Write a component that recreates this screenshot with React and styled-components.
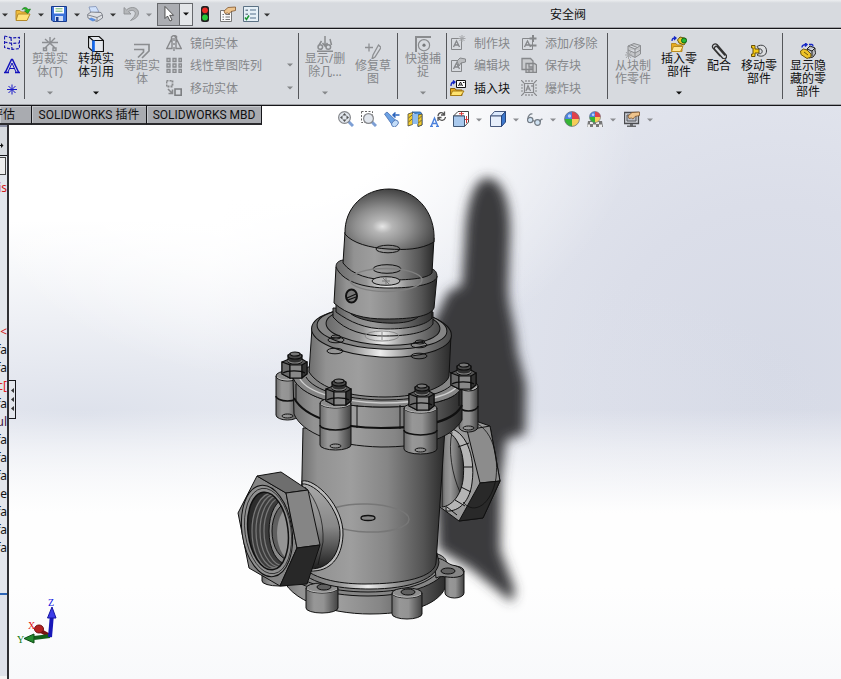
import React from 'react';
import styled, { createGlobalStyle, ThemeProvider } from 'styled-components';

const theme = {
    barColor: '#d7dadf',
    textColor: '#101010',
    mutedColor: '#85878a',
    lineColor: '#16161a',
    tabColor: '#a9abb0',
    panelColor: '#e3e6ec',
};

/* ---------- icons ---------- */

const block = (c) => (
    <g fill="none" stroke={c}>
        <path d="M1.500 3.500H11.500V14.500H1.500Z" />
        <path d="M3.500 12L6.500 6L9.500 12M4.500 10H8.500" strokeWidth="1.300" />
    </g>
);

const ball = (
    <g>
        <path d="M8 8V0.500A7.500 7.500 0 0 0 0.500 8Z" fill="#4c83e0" />
        <path d="M8 8V0.500A7.500 7.500 0 0 1 15.500 8Z" fill="#e0424a" />
        <path d="M8 8H0.500A7.500 7.500 0 0 0 8 15.500Z" fill="#35b535" />
        <path d="M8 8H15.500A7.500 7.500 0 0 1 8 15.500Z" fill="#f5cd58" />
        <circle cx="5.500" cy="5" r="1.700" fill="#b9d3fb" />
        <circle cx="8" cy="8" r="7.400" fill="none" stroke="#6d7480" strokeWidth="0.800" />
    </g>
);

const hand = (
    <path d="M4 5L8 1.500L15.500 1V4.500L11 5.500L9 8L7.500 7L5 7.500Z" fill="#eec48d" stroke="#80552c" strokeWidth="0.800" />
);

const icons = {
    open: (
        <>
            <path d="M1 4.500H5L6.500 6H12V13.500H1Z" fill="#f1bd3a" stroke="#b58a2a" />
            <path d="M3 8H15L12 14.500H1Z" fill="#ffe27a" stroke="#b58a2a" />
            <path d="M7 3.500C9 0.500 12 1 13 3.500L15.500 3L13 7.500L9.500 5L11.200 4.400C10.500 3 9 2.700 7 3.500Z" fill="#25b825" stroke="#126f12" strokeWidth="0.600" />
        </>
    ),
    save: (
        <>
            <path d="M0.500 0.500H15.500V15.500H2L0.500 14Z" fill="#3c73d9" stroke="#173a8c" />
            <path d="M3 1H13V7.500H3Z" fill="#fff" />
            <path d="M4.500 2.800H11.500M4.500 5.200H11.500" stroke="#65b36a" />
            <path d="M4 10H12V15H4Z" fill="#cfdcf6" />
            <path d="M5 11H7.500V15H5Z" fill="#173a8c" />
        </>
    ),
    print: (
        <>
            <path d="M4 7L2 1L9 0.500L12 6Z" fill="#cfe0fb" stroke="#7f91b5" strokeWidth="0.800" />
            <path d="M0.500 8.500L4 6L14 6.500L15.500 9V12L10 15.500L1 12Z" fill="#dfe1e5" stroke="#6c7079" strokeWidth="0.800" />
            <path d="M1 9L10 11.500L15 9M10 11.500V15" fill="none" stroke="#6c7079" strokeWidth="0.800" />
            <path d="M4 11.500L9 13.500L6 15.500L2 13.500Z" fill="#5c8fe0" />
        </>
    ),
    undo: <path d="M1 1.500V8H8L5.500 5.600C9 3 13.500 5 12 9C11.200 11 9.500 12.500 7.500 14.500C12.500 13 15.500 10.500 15.500 6.800C15.500 1.500 8 -0.500 3.600 3.900Z" fill="#b5b7ba" stroke="#898b8e" strokeWidth="0.800" />,
    cursor: <path d="M4 0.500V12.500L6.500 10L9 15L11 14L8.700 9.300H12.500Z" fill="#fff" stroke="#333" strokeWidth="0.800" />,
    rebuild: (
        <>
            <rect x="4" y="0" width="8" height="16" rx="2.500" fill="#20201f" />
            <circle cx="8" cy="4.300" r="2.900" fill="#ed2b25" />
            <circle cx="8" cy="11.500" r="2.900" fill="#28c93b" />
        </>
    ),
    props: (
        <>
            <path d="M0.500 4.500H11.500V15.500H0.500Z" fill="#fafafa" stroke="#777" />
            <path d="M2.500 8.500H4M5.500 8.500H10M2.500 11H4M5.500 11H10M2.500 13.500H4M5.500 13.500H10" stroke="#777" />
            {hand}
        </>
    ),
    options: (
        <>
            <path d="M0.500 0.500H15.500V15.500H0.500Z" fill="#e6f0f7" stroke="#5b7184" />
            <path d="M7 4H13M7 8H13M7 12H13" stroke="#54708c" />
            <path d="M2.500 3.500H5V5H2.500ZM2.500 7.500H5V9H2.500Z" fill="#789" />
            <path d="M2 11.500L3.500 13.500L6 9.500" fill="none" stroke="#1d9633" strokeWidth="1.500" />
        </>
    ),
    surface: <path d="M0.500 1L8 3L15.500 2.500V13.500L8 14.500L0.500 12.500ZM0.500 7L8 8.500L15.500 8M7 3L8 14" fill="none" stroke="#1818b0" strokeWidth="1.200" strokeDasharray="3 1.500" />,
    text: (
        <>
            <path d="M1.500 14L7.500 1.500H8.500L14.500 14M0 14.500H5M11 14.500H16" fill="none" stroke="#1212bc" strokeWidth="1.500" />
            <path d="M4 14L8 5L12 14M5.500 10.500H10.500" fill="none" stroke="#1212bc" />
        </>
    ),
    point: <path d="M8 3.500V13.500M3 8.500H13M4.500 5L11.500 12M11.500 5L4.500 12" stroke="#1818c8" />,
    trim: <path d="M0 6.500H6M9 6.500H16M8 1V7L3 12M8 7L13 12M3 3L11 10M13 2L6 9M1.500 12H4.500V14.500H1.500ZM11 12H14V14.500H11Z" fill="none" stroke="#8c8e92" strokeWidth="1.400" />,
    convert: (
        <>
            <path d="M5 4.500H15.500V15.500H5Z" fill="#e4e7ec" stroke="#111" strokeWidth="1.200" />
            <path d="M0.500 0.500H11L15.500 4.500H5ZM0.500 0.500V11.500L5 15.500V4.500Z" fill="#e4e7ec" stroke="#111" strokeWidth="1.200" />
            <path d="M5.500 4.500V15.500" stroke="#1268f0" strokeWidth="2.600" />
        </>
    ),
    offset: <path d="M0 1.500H15V8L8 15M0 6.500H9.500V9L4 14.500" fill="none" stroke="#8b8d90" strokeWidth="1.700" />,
    mirror: <path d="M5.500 1.500V4L0.800 13.500H6V3M10 3V13.500H15.200L10.500 4V1.500L8 0ZM8 0L5.500 2M8 3V6M8 8V10M8 12V16" fill="none" stroke="#88898c" strokeWidth="1.400" />,
    pattern: <path d="M1 1.500H4V4.500H1ZM7 1.500H10V4.500H7ZM13 1.500H15.500V4.500H13ZM1 7H4V10H1ZM7 7H10V10H7ZM13 7H15.500V10H13ZM1 12.500H4V15.500H1ZM7 12.500H10V15.500H7ZM13 12.500H15.500V15.500H13Z" fill="#c5c7ca" stroke="#898b8e" strokeWidth="1.300" />,
    move: (
        <>
            <path d="M0.500 0.500H6.500V6.500H0.500Z" fill="none" stroke="#88898c" strokeDasharray="2 1" strokeWidth="1.800" />
            <path d="M9 9H15.200V15.200H9Z" fill="none" stroke="#7d7f82" strokeWidth="1.600" />
            <path d="M2 9L6 13M6.500 9.500V13.500H2.500" fill="none" stroke="#88898c" strokeWidth="1.600" />
        </>
    ),
    relations: <path d="M8 0V9M5.500 7L8 10L10.500 7M0 15.200H16M4.500 5L1.500 10M13 3L14.500 9M1 11A2.300 2.300 0 1 0 5.600 11A2.300 2.300 0 1 0 1 11M9 11A2.300 2.300 0 1 0 13.600 11A2.300 2.300 0 1 0 9 11" fill="none" stroke="#8a8c8f" strokeWidth="1.500" />,
    repair: <path d="M4 0.500V8.500M0 4.500H8M13.500 2L16 4.500L10 14L7 16L8 12Z" fill="none" stroke="#8d8f92" strokeWidth="1.300" />,
    snap: (
        <>
            <path d="M0 1H16M1 0V16" stroke="#8a8c8f" strokeWidth="2" />
            <circle cx="9" cy="9.200" r="5.600" fill="none" stroke="#8a8c8f" strokeWidth="1.200" />
            <circle cx="9" cy="9.200" r="1.600" fill="#77797c" />
        </>
    ),
    makeBlock: <>{block('#85878a')}<path d="M12 0V7M8.500 3.500H15.500M9.500 1L14.500 6M14.500 1L9.500 6" stroke="#a2a4a7" /></>,
    editBlock: <>{block('#85878a')}<path d="M7 4L10 1L15.500 2V5L11 6L9 9Z" fill="#bcbec1" stroke="#85878a" /></>,
    insertBlock: (
        <>
            <path d="M6.500 0.500H15.500V7.500H6.500Z" fill="#fff" stroke="#111" />
            <path d="M8.500 6L10.500 2L12.500 6M9.500 5H11.500M13 2.500H14.500" stroke="#111" fill="none" />
            <path d="M1 6C1 3 2 2 4 2M3 0.500L5 2L3 4" stroke="#1527c5" strokeWidth="1.300" fill="none" />
            <path d="M0.500 8.500H5L6 10H12V15.500H0.500Z" fill="#e7ab20" stroke="#8b6410" />
            <path d="M2.500 11H14L11 15.500H0.500Z" fill="#ffe36e" stroke="#a67c16" />
        </>
    ),
    addBlock: <>{block('#85878a')}<path d="M12 0V7M8.500 3.500H15.500M9 10.500H15.500" stroke="#85878a" strokeWidth="2" /></>,
    saveBlock: <path d="M1 1.500H9.500L12 4V12.500H1ZM5 6.500H13.500L15.500 8V15.500H5ZM8 7V10H12V7M8 15V12H12V15" fill="#c8cacd" stroke="#85878a" strokeWidth="1.300" />,
    explode: <path d="M3.500 3.500H12.500V12.500H3.500ZM5 11L7 5.500L9.500 11M6 9H8.500M11 5V7M0 0L3 3M16 0L13 3M0 16L3 13M16 16L13 13M5 0V2M8 0V2M11 0V2M0 5H2M0 8H2M0 11H2M14 5H16M14 8H16M14 11H16M5 14V16M8 14V16M11 14V16" fill="none" stroke="#88898c" strokeWidth="1.200" />,
    fromBlock: (
        <>
            <path d="M3 3L9 0.500L15.500 2.500V11L10 14.500L3 11ZM3 3L10 6L15.500 2.500M10 6V14M6 2L12.500 4.500M3 7L10 10L15.500 7" fill="#c4c6c9" stroke="#8b8d90" />
            <path d="M3.500 8V16M0 12H7M1 9L6 15M6 9L1 15" stroke="#a5a7aa" />
        </>
    ),
    insertPart: (
        <>
            <path d="M0.500 7.500H5L6 9H11V15.500H0.500Z" fill="#e7ab20" stroke="#b88a20" />
            <path d="M2.500 10.500H12L9.500 15.500H0.500Z" fill="#ffe693" stroke="#b88a20" />
            <path d="M1 5C1 2.500 2 2 4.500 2M3 0.500L5 2L3 4" stroke="#1527c5" strokeWidth="1.300" fill="none" />
            <path d="M6.500 4L9 1L15 2.500V6L13 9L8 7Z" fill="#ecc928" stroke="#6e5a0e" />
            <circle cx="13" cy="4.500" r="2.500" fill="#29b83a" stroke="#0d6819" />
        </>
    ),
    mate: <path d="M14 12.500L6.500 4A1.800 1.800 0 0 0 3.800 6.500L11.500 15A2.300 2.300 0 0 0 15 12L6 1.500A2.800 2.800 0 0 0 1.800 5L9 13" fill="none" stroke="#333" strokeWidth="1.300" />,
    movePart: (
        <>
            <path d="M0.500 2.500H4V6H8V10H4V13.500H0.500V11H2V5H0.500Z" fill="#f4c915" stroke="#695008" />
            <path d="M6 3.500C11 0.500 15.500 3 15.500 8C15.500 13 10 14.500 6 12L8 10.500C12 12 12.500 5 8 6Z" fill="#dcdee1" stroke="#3b3d40" />
        </>
    ),
    hidden: (
        <>
            <path d="M7 6L10 3L15 5V8L16 10L13 14L9 15Z M7 6L12 8L15 5M12 8V13" fill="#b9bbbf" stroke="#222" />
            <path d="M0.500 8L3.500 6L7 7L11 11V14L7 15.500L1 11.500Z M4 9L8 12" fill="#edc229" stroke="#6e560c" />
            <path d="M2 4.500C2 2 4 1.500 6.500 1.500M5 0L7 1.500L5 3.500M9 1.500H12C13 1.500 13 2.500 13 3.500" fill="none" stroke="#1527c5" strokeWidth="1.400" />
        </>
    ),
    zoomFit: (
        <>
            <path d="M10 10L15 15" stroke="#7d9fd5" strokeWidth="3" />
            <circle cx="6.500" cy="6.500" r="5.900" fill="#e1e6ed" stroke="#85878b" strokeWidth="1.200" />
            <path d="M6.500 2L8.500 4.500H4.500ZM6.500 11L8.500 8.500H4.500ZM2 6.500L4.500 4.500V8.500ZM11 6.500L8.500 4.500V8.500Z" fill="#555" />
            <circle cx="6.500" cy="6.500" r="1.500" fill="#e1e6ed" />
        </>
    ),
    zoomArea: (
        <>
            <path d="M0.500 0.500H11.500V11.500H0.500Z" fill="none" stroke="#666" strokeDasharray="2 1.500" />
            <path d="M10.500 10.500L15 15" stroke="#7d9fd5" strokeWidth="3" />
            <circle cx="7.500" cy="7.500" r="4.900" fill="#e1e6ed" stroke="#85878b" strokeWidth="1.200" />
        </>
    ),
    prevView: (
        <>
            <path d="M0.500 3L3 1L13 10.500L9 15Z" fill="#6ca2e4" stroke="#4a6fae" strokeWidth="0.800" />
            <ellipse cx="11" cy="12.500" rx="3.800" ry="2.800" transform="rotate(-45 11 12.500)" fill="#c3ddf9" stroke="#4a6fae" strokeWidth="0.800" />
            <path d="M9 4H15.500M11.500 1.500L9 4L11.500 6.500" fill="none" stroke="#2b64bd" strokeWidth="1.500" />
        </>
    ),
    section: (
        <>
            <path d="M5 1H13.500L15 3V14L11 15.500V4Z" fill="#4a90dd" stroke="#225694" strokeWidth="0.800" />
            <path d="M1 3L5.500 1.500V13.500L1 15ZM11 4L15 3V14L11 15.500Z" fill="#f3cc2d" stroke="#4a4a40" strokeWidth="0.800" />
            <path d="M5.500 3H11V13H5.500Z" fill="#8dbbef" />
            <path d="M1.500 7L5 4M1.500 11L5 8M11.500 8L14.500 5M11.500 12L14.500 9" stroke="#4a4a40" strokeWidth="0.800" />
        </>
    ),
    orient: (
        <>
            <path d="M1 15.500L4.500 7L8 15.500M2.500 12.500H6.500M0 15.500H3M6 15.500H9" fill="none" stroke="#4a80dc" strokeWidth="1.400" />
            <path d="M8 5C8.500 1 12.500 0.500 14 3.500M14.500 0.500V4H11M15.500 6C15 10 10 10.500 8.500 7M8 10V6.500H11.500" fill="none" stroke="#555" strokeWidth="1.300" />
        </>
    ),
    viewCube: (
        <>
            <path d="M5 0.500H15.500V11L11.500 15.500V5H0.500Z" fill="#fff" stroke="#444" />
            <path d="M0.500 5H11.500V15.500H0.500Z" fill="#a9c9ed" stroke="#3f5674" />
            <path d="M8.500 1V4.500M6 2.700H11M13.500 5V12M12 8.500H15.500" stroke="#dc3838" />
        </>
    ),
    display: (
        <>
            <path d="M0.500 5L4.500 0.500H15.500L11.500 5Z" fill="#dceafd" stroke="#47597e" />
            <path d="M0.500 5H11.500V15.500H0.500Z" fill="#e6eefa" stroke="#47597e" />
            <path d="M11.500 5L15.500 0.500V11L11.500 15.500Z" fill="#3d78cd" stroke="#27457c" />
        </>
    ),
    glasses: (
        <g fill="#cfe2f3" stroke="#737b84" strokeWidth="1.200">
            <circle cx="3.200" cy="9" r="2.700" />
            <circle cx="10.500" cy="11.500" r="2.800" />
            <path d="M6 9.500L8 10.500M0.800 8C1 5 3 2.500 5.500 3M13.200 11C13.500 8.500 14.500 7.500 15.500 8.500" fill="none" />
        </g>
    ),
    appearance: ball,
    scene: (
        <>
            <path d="M1 10H15L16 16H0Z" fill="#777" />
            <path d="M3 11H6V13H3ZM9 11H12V13H9ZM0.500 13.500H3V16H0.500ZM6 13.500H9V16H6ZM12 13.500H15V16H12Z" fill="#eee" />
            <g transform="translate(2 0) scale(0.750)">{ball}</g>
        </>
    ),
    viewSettings: (
        <>
            <path d="M0.500 1.500H14.500V12.500H0.500Z" fill="#ced1d7" stroke="#4c4d50" strokeWidth="1.300" />
            <path d="M3 4H12V10H3Z" fill="#b9bec8" stroke="#55575a" />
            <path d="M6 13H9V14.500H12V16H3V14.500H6Z" fill="#66686b" />
            {hand}
        </>
    ),
};

function Icon({ name, size = 16 }) {
    return (
        <svg width={size} height={size} viewBox="0 0 16 16" aria-hidden="true">
            {icons[name]}
        </svg>
    );
}

function Caret() {
    return (
        <svg width="6" height="4" viewBox="0 0 6 4" aria-hidden="true">
            <path d="M0 0.500H6L3 3.500Z" fill="currentColor" />
        </svg>
    );
}

/* ---------- 3D model ---------- */

function Lug({ x, y, w, h, split }) {
    const r = w / 2;
    const side = `A${r} 5 0 0 0 ${x + w}`;
    return (
        <g stroke="#101010">
            <path d={`M${x} ${y}V${y + h}${side} ${y + h}V${y}Z`} fill="url(#lug)" />
            <ellipse cx={x + r} cy={y} rx={r} ry="5" fill="#8d8d8d" />
            <path d={`M${x + 1} ${y + 1}A${r} 5 0 0 0 ${x + w - 1} ${y + 1}`} fill="none" stroke="#bbb" />
            {split && (
                <>
                    <path d={`M${x} ${y + split}${side} ${y + split}`} fill="none" strokeWidth="1.600" />
                    <ellipse cx={x + r} cy={y + h + 1} rx="5.500" ry="2" fill="none" />
                </>
            )}
        </g>
    );
}

function Bolt({ x, y }) {
    return (
        <g transform={`translate(${x} ${y})`} stroke="#0c0c0c" strokeWidth="1.100">
            <path d="M-13 -7L-6 -10H7L12 -7V5L6 9H-5L-13 5Z" fill="#555" />
            <path d="M-13 -7L-5 -4V9L-13 5Z" fill="#6a6a6a" />
            <path d="M-5 -4H7V9H-5Z" fill="#888" />
            <path d="M7 -4L12 -7V5L7 9Z" fill="#333" />
            <path d="M-12 4A12 3.500 0 0 1 10 4" fill="none" />
            <path d="M-7 -14V-8A7 3 0 0 0 7 -8V-14Z" fill="#303030" />
            <ellipse cx="0" cy="-13" rx="7" ry="3" fill="#4a4a4a" />
            <ellipse cx="0" cy="-15" rx="5" ry="2" fill="#777" />
            <path d="M-7 -9A7 3 0 0 0 7 -9" fill="none" stroke="#858585" />
        </g>
    );
}

const baseHoles = [
    [324, 587],
    [408, 592],
    [448, 571],
];

const threads = [4, 8, 12, 16];

function SafetyValve() {
    return (
        <ModelSvg viewBox="230 150 320 480" role="img" aria-label="安全阀">
            <defs>
                <linearGradient id="lug">
                    <stop offset="0" stopColor="#6c6c6c" />
                    <stop offset="0.250" stopColor="#979797" />
                    <stop offset="0.550" stopColor="#939393" />
                    <stop offset="1" stopColor="#424242" />
                </linearGradient>
                <linearGradient id="metal">
                    <stop offset="0" stopColor="#5c5c5c" />
                    <stop offset="0.150" stopColor="#858585" />
                    <stop offset="0.400" stopColor="#989898" />
                    <stop offset="0.650" stopColor="#777" />
                    <stop offset="1" stopColor="#303030" />
                </linearGradient>
                <linearGradient id="metalWide">
                    <stop offset="0" stopColor="#6e6e6e" />
                    <stop offset="0.120" stopColor="#929292" />
                    <stop offset="0.350" stopColor="#9e9e9e" />
                    <stop offset="0.600" stopColor="#868686" />
                    <stop offset="0.850" stopColor="#545454" />
                    <stop offset="1" stopColor="#2a2a2a" />
                </linearGradient>
                <linearGradient id="shoulder">
                    <stop offset="0" stopColor="#6a6a6a" />
                    <stop offset="0.300" stopColor="#969696" />
                    <stop offset="0.500" stopColor="#ededed" />
                    <stop offset="0.700" stopColor="#949494" />
                    <stop offset="1" stopColor="#4a4a4a" />
                </linearGradient>
                <radialGradient id="dome" cx="0.420" cy="0.620" r="0.620">
                    <stop offset="0" stopColor="#e6e6e6" />
                    <stop offset="0.180" stopColor="#b5b5b5" />
                    <stop offset="0.500" stopColor="#8e8e8e" />
                    <stop offset="1" stopColor="#444" />
                </radialGradient>
                <linearGradient id="pipe" x1="0" y1="0" x2="0" y2="1">
                    <stop offset="0" stopColor="#a8a8a8" />
                    <stop offset="0.500" stopColor="#888" />
                    <stop offset="1" stopColor="#1e1e1e" />
                </linearGradient>
                <clipPath id="boreClip">
                    <ellipse cx="268" cy="531" rx="20" ry="39" transform="rotate(-7 268 531)" />
                </clipPath>
                <filter id="soft" x="-30%" y="-10%" width="160%" height="120%">
                    <feGaussianBlur stdDeviation="6" />
                </filter>
            </defs>

            <path
                d="M487 178C501 178 510 198 510 230L508 285C507 305 516 325 517 350L526 385L525 434L506 440L501 480L500 550L515 590L512 602L470 568L438 549L430 330L448 292L462 285L465 240C466 202 475 178 487 178Z"
                fill="#3a3b3d"
                filter="url(#soft)"
            />

            {/* outlet */}
            <g stroke="#101010" strokeLinejoin="round">
                <path d="M440 425L467 418L490 426L500 481L483 518L459 521L440 507Z" fill="#9a9a9a" />
                <path d="M467 430L490 426L500 481L480 483Z" fill="#8c8c8c" />
                <path d="M480 483L500 481L483 518L459 521Z" fill="#292929" />
                <path d="M448 428C465 430 476 455 472 483C470 500 460 512 446 511Z" fill="#b5b5b5" />
                <path d="M442 430C458 432 466 455 463 480C461 495 452 506 442 507Z" fill="url(#metal)" />
                <path d="M458 447L469 443M463 467L473 467M461 487L471 492M455 500L465 506M447 507L457 515" fill="none" />
                <path d="M467 420C490 424 499 450 496 478C492 504 474 516 463 502M452 432C448 450 452 475 460 492" fill="none" strokeWidth="0.800" />
            </g>

            {/* base flange */}
            <g stroke="#101010">
                <Lug x={262} y={571} w={34} h={10} />
                <path d="M280 566C280 600 330 614 370 614C420 614 446 600 447 580L446 562L300 560Z" fill="url(#metalWide)" />
                <path d="M278 562C284 584 325 596 368 596C412 596 446 582 447 565C446 552 436 546 300 548Z" fill="#858585" />
                <path d="M284 563C294 582 330 592 368 592C410 592 440 580 443 562" fill="none" />
                <Lug x={445} y={571} w={19} h={22} />
                <path d="M434 558C444 558 446 563 452 565C464 567 466 574 461 576C450 580 444 574 436 578Z" fill="#858585" />
                <Lug x={306} y={588} w={32} h={20} />
                <Lug x={392} y={593} w={30} h={21} />
                {baseHoles.map(([x, y]) => (
                    <ellipse key={x} cx={x} cy={y} rx="7" ry="3" fill="#606060" />
                ))}
            </g>

            {/* lower body */}
            <path d="M297 567C310 586 345 589 370 589C410 589 438 579 439 562L436 550L302 550Z" fill="url(#shoulder)" stroke="#101010" />
            <path d="M303 428L300 565C315 581 345 584 365 584C405 584 434 577 436 563L445 428Z" fill="url(#metalWide)" stroke="#101010" />
            <ellipse cx="367" cy="518" rx="42" ry="14" fill="none" stroke="#777" strokeWidth="1.500" transform="rotate(2 367 518)" />
            <ellipse cx="368" cy="518" rx="7" ry="2.500" fill="#858585" stroke="#101010" strokeWidth="1.300" />

            {/* inlet */}
            <g stroke="#101010" strokeLinejoin="round">
                <path d="M302 481C315 478 344 506 343 535C342 558 330 572 310 571Z" fill="#bbb" />
                <path d="M302 484C315 482 341 510 340 535C339 556 328 569 310 569Z" fill="url(#pipe)" />
                <path d="M305 487C317 500 324 520 323 542L318 565" fill="none" strokeWidth="0.700" />
                <path d="M257 476L238 513L249 568L280 586L297 548L286 493Z" fill="#858585" />
                <path d="M257 476L281 472L308 490L286 493Z" fill="#6e6e6e" />
                <path d="M286 493L308 490L320 545L297 548Z" fill="#858585" />
                <path d="M297 548L320 545L307 584L280 586Z" fill="#282828" />
                <ellipse cx="267" cy="531" rx="25" ry="46" transform="rotate(-8 267 531)" fill="#909090" />
                <ellipse cx="268" cy="531" rx="23" ry="43" transform="rotate(-8 268 531)" fill="none" strokeWidth="0.700" />
                <g clipPath="url(#boreClip)">
                    <path d="M240 485H296V580H240Z" fill="#2c2c2c" />
                    {threads.map((t) => (
                        <ellipse key={t} cx={268 + t} cy="531" rx="20" ry={39 - t / 4} fill="#3c3c3c" stroke="#777" strokeWidth="1.300" />
                    ))}
                    <ellipse cx="287" cy="531" rx="18" ry="33" fill="#8a8a8a" />
                    <ellipse cx="290" cy="531" rx="18" ry="29" fill="#5f5f5f" />
                    <ellipse cx="295" cy="533" rx="18" ry="29" fill="#949494" stroke="none" />
                </g>
                <ellipse cx="268" cy="531" rx="20" ry="39" transform="rotate(-7 268 531)" fill="none" strokeWidth="1.500" />
            </g>

            {/* bolted flange */}
            <Lug x={459} y={386} w={19} h={41} split={20} />
            <Lug x={276} y={376} w={23} h={39} split={20} />
            <g stroke="#101010">
                <path d="M293 378C302 396 335 407 381 407C430 407 458 400 462 386V420C450 440 420 447 381 447C335 446 302 433 294 414Z" fill="url(#metalWide)" />
                <path d="M293 378C301 396 335 407 381 407C430 407 458 400 462 386L450 372L310 366Z" fill="#858585" />
                <path d="M300 379C308 393 342 402 381 403C425 403 455 395 459 383" fill="none" stroke="#ccc" strokeWidth="1.500" />
                <path d="M306 377C314 391 345 399 381 400C425 400 450 392 455 380" fill="none" />
                <path d="M294 398C305 418 340 428 381 428C430 428 456 419 462 405" fill="none" strokeWidth="2" />
                <path d="M357 405V428M400 405V429M296 384V400M459 392V406" fill="none" />
            </g>
            <Lug x={320} y={403} w={31} h={42} split={22} />
            <Lug x={404} y={408} w={33} h={41} split={22} />

            {/* upper body */}
            <g stroke="#101010">
                <path d="M312 328L309 372C320 389 350 397 385 397C422 397 447 386 449 376L451 335Z" fill="url(#metalWide)" />
                <ellipse cx="381.500" cy="332" rx="70" ry="25" transform="rotate(3 381.500 332)" fill="url(#shoulder)" />
                <ellipse cx="382" cy="328" rx="65" ry="21" transform="rotate(3 382 328)" fill="#858585" />
                <ellipse cx="383" cy="326" rx="57" ry="19" transform="rotate(3 383 326)" fill="url(#shoulder)" />
                <g fill="none">
                    <ellipse cx="335" cy="351" rx="8" ry="2.800" />
                    <ellipse cx="336" cy="340" rx="8" ry="2.800" />
                    <ellipse cx="419" cy="356" rx="8" ry="2.800" />
                    <ellipse cx="419" cy="345" rx="8" ry="2.800" />
                    <ellipse cx="420" cy="342" rx="5" ry="2" />
                    <ellipse cx="336" cy="337" rx="5" ry="2" />
                </g>
            </g>

            {/* neck */}
            <g stroke="#101010">
                <path d="M333 308V317C345 331 365 336 385 336C410 336 428 332 433 324V312Z" fill="url(#shoulder)" />
                <path d="M336 300V312C350 322 365 329 386 329C410 329 426 325 432 318V304Z" fill="url(#metal)" />
                <path d="M349 312C358 323 406 328 418 317L420 310L345 305Z" fill="#4b4b4b" />
            </g>
            <ellipse cx="382" cy="336" rx="17" ry="5" fill="none" stroke="#888" />
            <path d="M382 332V340M377 336H387" stroke="#888" />

            {/* cap */}
            <g stroke="#101010">
                <path d="M336 267L334 303C347 315 365 319 385 319C410 319 430 317 434 308L437 276Z" fill="url(#metalWide)" />
                <path d="M343 260C338 261 336 263 336 267C342 281 362 288 389 288C412 288 434 285 437 277C437 272 435 270 432 269Z" fill="url(#shoulder)" />
                <path d="M345 232L343 263C352 275 370 280 390 280C412 280 428 278 432 273L434 238Z" fill="url(#metalWide)" />
                <path d="M345 234C344 208 364 189 389 189C415 189 436 211 434 242C420 250 405 250 388 249C370 248 352 243 345 234Z" fill="url(#dome)" />
                <ellipse cx="388" cy="249" rx="12" ry="3.800" fill="none" />
                <ellipse cx="387" cy="269" rx="14" ry="4.300" fill="none" />
                <ellipse cx="386" cy="281" rx="14" ry="4.300" fill="#b4b4b4" />
                <ellipse cx="386" cy="280" rx="36" ry="11.500" fill="none" stroke="#808080" strokeWidth="1.500" />
                <path d="M386 277V285M382 281H390M383 278L389 284" stroke="#777" />
                <ellipse cx="351.500" cy="296" rx="5.500" ry="6.500" fill="#777" strokeWidth="2" />
                <path d="M347 298L356 294M348 300L356 297" strokeWidth="1.200" />
            </g>

            <Bolt x={295} y={369} />
            <Bolt x={464} y={380} />
            <Bolt x={339} y={396} />
            <Bolt x={422} y={401} />
        </ModelSvg>
    );
}

function Triad() {
    return (
        <TriadSvg viewBox="16 594 44 52" role="img" aria-label="坐标轴">
            <path d="M50 636L39 630" stroke="#7b1414" strokeWidth="4" />
            <ellipse cx="39" cy="629" rx="4.500" ry="4" fill="#b32222" stroke="#701010" />
            <path d="M50 636L34 638" stroke="#14601b" strokeWidth="4" />
            <path d="M24 638.500L34 634V643Z" fill="#258a2e" stroke="#0b4b12" />
            <path d="M50 637L52 614" stroke="#1717b8" strokeWidth="4" />
            <path d="M52 607L56 618H47.500Z" fill="#3c3ce8" stroke="#1515a0" />
            <AxisName x="48" y="606" fill="#1111e0">Z</AxisName>
            <AxisName x="28" y="629" fill="#e01111">X</AxisName>
            <AxisName x="17" y="643" fill="#0f7a0f">Y</AxisName>
        </TriadSvg>
    );
}

/* ---------- toolbars ---------- */

function BigTool({ icon, lines, menu, muted, wide = 46 }) {
    return (
        <BigButton type="button" $muted={muted} $menu={menu} $wide={wide}>
            <Icon name={icon} />
            {lines.map((line) => (
                <BigLine key={line}>{line}</BigLine>
            ))}
            {menu && (
                <BigCaret>
                    <Caret />
                </BigCaret>
            )}
        </BigButton>
    );
}

function ToolList({ items, wide }) {
    return (
        <ListColumn $wide={wide}>
            {items.map(({ icon, label, menu, active }) => (
                <ListButton type="button" key={label} $muted={!active}>
                    <Icon name={icon} />
                    <ListLabel>{label}</ListLabel>
                    {menu && <Caret />}
                </ListButton>
            ))}
        </ListColumn>
    );
}

const quickTools = [
    { icon: 'open', label: '打开' },
    { icon: 'save', label: '保存' },
    { icon: 'print', label: '打印' },
    { icon: 'undo', label: '撤消', muted: true },
];

const viewTools = [
    { icon: 'zoomFit', label: '整屏显示全图' },
    { icon: 'zoomArea', label: '局部放大' },
    { icon: 'prevView', label: '上一视图' },
    { icon: 'section', label: '剖面视图' },
    { icon: 'orient', label: '动态注解视图' },
    { icon: 'viewCube', label: '视图定向', menu: true },
    { icon: 'display', label: '显示样式', menu: true },
    { icon: 'glasses', label: '隐藏所有类型', menu: true },
    { icon: 'appearance', label: '编辑外观' },
    { icon: 'scene', label: '应用布景', menu: true },
    { icon: 'viewSettings', label: '视图设定', menu: true },
];

const treeRows = [
    { text: 'is', color: '#d01818' },
    {}, {}, {}, {}, {}, {}, {},
    { text: '<', color: '#d01818' },
    { text: 'fa' },
    { text: 'fa' },
    { text: 'c[', color: '#e02020' },
    { text: 'fa' },
    { text: 'ul', color: '#401040' },
    { text: 'fa' },
    { text: 'fa' },
    { text: 'fa' },
    { text: 'e' },
    { text: 'fa' },
    { text: 'fa' },
    { text: 'fa' },
];

function App() {
    return (
        <ThemeProvider theme={theme}>
            <GlobalStyle />
            <Window>
                <TitleBar>
                    <CaretButton type="button" aria-label="新建选项">
                        <Caret />
                    </CaretButton>
                    {quickTools.map(({ icon, label, muted }) => (
                        <React.Fragment key={icon}>
                            <IconButton type="button" aria-label={label} $wide={26}>
                                <Icon name={icon} />
                            </IconButton>
                            <CaretButton type="button" aria-label={`${label}选项`} $muted={muted}>
                                <Caret />
                            </CaretButton>
                        </React.Fragment>
                    ))}
                    <SelectGroup>
                        <SelectButton type="button" aria-label="选择">
                            <Icon name="cursor" />
                        </SelectButton>
                        <SelectCaret type="button" aria-label="选择选项">
                            <Caret />
                        </SelectCaret>
                    </SelectGroup>
                    <IconButton type="button" aria-label="重建模型" $wide={23}>
                        <Icon name="rebuild" />
                    </IconButton>
                    <IconButton type="button" aria-label="文件属性" $wide={23}>
                        <Icon name="props" />
                    </IconButton>
                    <IconButton type="button" aria-label="选项" $wide={23}>
                        <Icon name="options" />
                    </IconButton>
                    <CaretButton type="button" aria-label="更多选项">
                        <Caret />
                    </CaretButton>
                    <Title>安全阀</Title>
                </TitleBar>

                <Ribbon>
                    <SketchColumn>
                        <SketchButton type="button" aria-label="曲面"><Icon name="surface" /></SketchButton>
                        <SketchButton type="button" aria-label="文字"><Icon name="text" /></SketchButton>
                        <SketchButton type="button" aria-label="点"><Icon name="point" /></SketchButton>
                    </SketchColumn>
                    <Group>
                        <BigTool icon="trim" lines={['剪裁实', '体(T)']} menu muted />
                        <BigTool icon="convert" lines={['转换实', '体引用']} menu />
                        <BigTool icon="offset" lines={['等距实', '体']} muted />
                        <ToolList
                            wide={133}
                            items={[
                                { icon: 'mirror', label: '镜向实体' },
                                { icon: 'pattern', label: '线性草图阵列', menu: true },
                                { icon: 'move', label: '移动实体', menu: true },
                            ]}
                        />
                    </Group>
                    <Group>
                        <BigTool icon="relations" lines={['显示/删', '除几...']} menu muted wide={48} />
                        <BigTool icon="repair" lines={['修复草', '图']} muted wide={48} />
                    </Group>
                    <Group>
                        <BigTool icon="snap" lines={['快速捕', '捉']} menu muted />
                    </Group>
                    <Group>
                        <ToolList
                            wide={71}
                            items={[
                                { icon: 'makeBlock', label: '制作块' },
                                { icon: 'editBlock', label: '编辑块' },
                                { icon: 'insertBlock', label: '插入块', active: true },
                            ]}
                        />
                        <ToolList
                            wide={87}
                            items={[
                                { icon: 'addBlock', label: '添加/移除' },
                                { icon: 'saveBlock', label: '保存块' },
                                { icon: 'explode', label: '爆炸块' },
                            ]}
                        />
                    </Group>
                    <Group>
                        <BigTool icon="fromBlock" lines={['从块制', '作零件']} muted />
                        <BigTool icon="insertPart" lines={['插入零', '部件']} menu />
                        <BigTool icon="mate" lines={['配合']} wide={34} />
                        <BigTool icon="movePart" lines={['移动零', '部件']} />
                    </Group>
                    <Group>
                        <BigTool icon="hidden" lines={['显示隐', '藏的零', '部件']} />
                    </Group>
                </Ribbon>

                <Workspace>
                    <TabRow>
                        <Tab type="button" $clipped>评估</Tab>
                        <Tab type="button">SOLIDWORKS 插件</Tab>
                        <Tab type="button">SOLIDWORKS MBD</Tab>
                        <ViewBar>
                            {viewTools.map(({ icon, label, menu }) => (
                                <React.Fragment key={icon}>
                                    <IconButton type="button" aria-label={label} $wide={23}>
                                        <Icon name={icon} />
                                    </IconButton>
                                    {menu && (
                                        <CaretButton type="button" aria-label={`${label}选项`} $muted $wide={14}>
                                            <Caret />
                                        </CaretButton>
                                    )}
                                </React.Fragment>
                            ))}
                        </ViewBar>
                    </TabRow>
                    <Body>
                        <Panel>
                            <PanelHead>
                                <svg width="4" height="5" viewBox="0 0 4 5" aria-hidden="true">
                                    <path d="M0 2H1V0L3.500 2.500L1 5V3H0Z" fill="#111" />
                                </svg>
                            </PanelHead>
                            <FilterBox aria-label="过滤器" />
                            <Tree>
                                {treeRows.map(({ text, color }, i) => (
                                    <TreeRow key={i} $color={color}>{text}</TreeRow>
                                ))}
                            </Tree>
                            <PanelFoot />
                        </Panel>
                        <Viewport>
                            <SafetyValve />
                            <Triad />
                            <PanelHandle type="button" aria-label="折叠面板">
                                <svg width="5" height="26" viewBox="0 0 5 26" aria-hidden="true">
                                    <path d="M4 1V6L1 3.500ZM4 10V15L1 12.500ZM4 19V24L1 21.500Z" fill="#333" />
                                </svg>
                            </PanelHandle>
                        </Viewport>
                    </Body>
                </Workspace>
            </Window>
        </ThemeProvider>
    );
}

const GlobalStyle = createGlobalStyle`
    * {
        box-sizing: border-box;
    }
    body {
        margin: 0;
        overflow: hidden;
        font-family: 'Noto Sans', 'Noto Sans CJK SC', sans-serif;
        font-size: 12px;
        color: ${(props) => props.theme.textColor};
    }
    button {
        padding: 0;
        border: 0;
        background: none;
        font: inherit;
        color: inherit;
    }
    svg {
        display: block;
        flex: none;
    }
`;

const Window = styled.div`
    display: flex;
    flex-direction: column;
    height: 100vh;
    overflow: hidden;
`;

const TitleBar = styled.header`
    display: flex;
    align-items: center;
    flex: none;
    height: 29px;
    background: linear-gradient(to bottom, #eceef0, ${(props) => props.theme.barColor} 3px);
    border-bottom: 1px solid ${(props) => props.theme.lineColor};
    box-shadow: inset 0 -1px #a2a3a7;
`;

const IconButton = styled.button`
    display: flex;
    justify-content: center;
    align-items: center;
    flex: none;
    width: ${(props) => props.$wide}px;
    height: 24px;
`;

const CaretButton = styled.button`
    display: flex;
    justify-content: center;
    align-items: center;
    flex: none;
    width: ${(props) => props.$wide || 10}px;
    height: 24px;
    padding-top: 2px;
    color: ${(props) => (props.$muted ? '#8b8d91' : '#333')};
`;

const SelectGroup = styled.div`
    display: flex;
    flex: none;
    width: 36px;
    height: 23px;
    margin-left: 3px;
    border: 1px solid #66686c;
`;

const SelectButton = styled.button`
    display: flex;
    justify-content: center;
    align-items: center;
    width: 22px;
    background: #abadb2;
    border-right: 1px solid #66686c;
`;

const SelectCaret = styled.button`
    display: flex;
    justify-content: center;
    align-items: center;
    flex: 1;
    background: #e4e6e9;
`;

const Title = styled.h1`
    margin: 0 auto 0 278px;
    padding-top: 1px;
    font-size: 12px;
    font-weight: normal;
    line-height: 18px;
`;

const Ribbon = styled.div`
    display: flex;
    flex: none;
    height: 77px;
    background: ${(props) => props.theme.barColor};
    border-bottom: 1px solid ${(props) => props.theme.lineColor};
    box-shadow: inset 0 1px #eceef0, inset 0 -1px #9fa1a5;
`;

const SketchColumn = styled.div`
    display: flex;
    flex-direction: column;
    width: 24px;
    padding-top: 2px;
`;

const SketchButton = styled.button`
    display: flex;
    justify-content: center;
    align-items: center;
    height: 23px;
`;

const Group = styled.div`
    display: flex;
    height: 66px;
    margin-top: 4px;
    padding-left: 2px;
    border-left: 1px solid #54565a;
`;

const BigButton = styled.button`
    display: flex;
    flex-direction: column;
    align-items: center;
    justify-content: flex-start;
    flex: none;
    width: ${(props) => props.$wide}px;
    padding-top: ${(props) => (props.$menu ? 3 : 10)}px;
    color: ${(props) => (props.$muted ? props.theme.mutedColor : props.theme.textColor)};
`;

const BigLine = styled.span`
    line-height: 13px;
    white-space: nowrap;
`;

const BigCaret = styled.span`
    margin-top: auto;
    padding-bottom: 4px;
`;

const ListColumn = styled.div`
    display: flex;
    flex-direction: column;
    flex: none;
    width: ${(props) => props.$wide}px;
    margin-top: -1px;
    padding-left: 1px;
`;

const ListButton = styled.button`
    display: flex;
    align-items: center;
    gap: 8px;
    height: 23px;
    padding-right: 5px;
    color: ${(props) => (props.$muted ? props.theme.mutedColor : props.theme.textColor)};
`;

const ListLabel = styled.span`
    flex: 1;
    text-align: left;
    white-space: nowrap;
`;

const Workspace = styled.main`
    display: flex;
    flex-direction: column;
    flex: 1;
    min-height: 0;
    background:
        linear-gradient(to bottom, transparent 53%, rgba(255, 255, 255, 0.45) 60%, #fefefe 71%, #fefefe 84%, #f8f9fb 100%),
        radial-gradient(ellipse 42% 48% at 34% 0%, #fff 35%, rgba(255, 255, 255, 0) 100%),
        radial-gradient(ellipse 90% 34% at 10% 54%, #dde1eb, rgba(223, 227, 237, 0) 100%),
        radial-gradient(ellipse 68% 100% at 92% 47%, #d6dae6, #dbdee9 30%, #e3e6ee 60%, #f4f5f9 85%, #fff 100%);
`;

const TabRow = styled.div`
    display: flex;
    flex: none;
    height: 19px;
`;

const Tab = styled.button`
    display: flex;
    justify-content: ${(props) => (props.$clipped ? 'flex-end' : 'center')};
    align-items: center;
    flex: none;
    width: ${(props) => (props.$clipped ? 32 : 115)}px;
    padding-right: ${(props) => (props.$clipped ? 16 : 0)}px;
    overflow: hidden;
    font-family: Roboto, 'Noto Sans CJK SC', sans-serif;
    line-height: 16px;
    white-space: nowrap;
    background: ${(props) => props.theme.tabColor};
    border-right: 1px solid ${(props) => props.theme.lineColor};
    border-bottom: 2px solid #2b2b2e;
    box-shadow: inset 1px 1px #c6c8cc;
`;

const ViewBar = styled.div`
    display: flex;
    position: relative;
    z-index: 1;
    height: 24px;
    margin: 1px 0 0 72px;
`;

const Body = styled.div`
    display: flex;
    flex: 1;
    min-height: 0;
`;

const Panel = styled.aside`
    display: flex;
    flex-direction: column;
    flex: none;
    width: 9px;
    overflow: hidden;
    background: ${(props) => props.theme.panelColor};
    border-right: 2px solid #2f2f33;
`;

const PanelHead = styled.div`
    display: flex;
    align-items: center;
    flex: none;
    height: 31px;
    padding-top: 8px;
    background: ${(props) => props.theme.barColor};
    border-top: 2px solid #8c90a4;
    border-bottom: 1px solid ${(props) => props.theme.lineColor};
`;

const FilterBox = styled.input`
    flex: none;
    width: 6px;
    height: 18px;
    margin-top: 1px;
    padding: 0;
    border: 1px solid #444;
    border-left: 0;
    background: #eee;
`;

const Tree = styled.div`
    flex: none;
    padding-top: 3px;
    height: 420px;
    border-bottom: 2px solid #2d64b5;
`;

const TreeRow = styled.div`
    display: flex;
    justify-content: flex-end;
    width: 7px;
    height: 18px;
    overflow: hidden;
    line-height: 20px;
    color: ${(props) => props.$color || '#141414'};
`;

const PanelFoot = styled.div`
    flex: 1;
    background: #dfe2ea;
    border-bottom: 3px solid #f4f4f4;
`;

const Viewport = styled.section`
    position: relative;
    flex: 1;
    min-width: 0;
    overflow: hidden;
`;

const ModelSvg = styled.svg`
    width: 320px;
    height: 480px;
    margin: 25px 0 0 221px;
`;

const TriadSvg = styled.svg`
    position: absolute;
    left: 7px;
    bottom: 33px;
    width: 44px;
    height: 52px;
`;

const AxisName = styled.text`
    font-family: 'Liberation Serif', serif;
    font-size: 10px;
`;

const PanelHandle = styled.button`
    position: absolute;
    left: 0;
    top: 255px;
    display: flex;
    justify-content: center;
    align-items: center;
    width: 7px;
    height: 39px;
    background: ${(props) => props.theme.panelColor};
    border: 1px solid ${(props) => props.theme.lineColor};
    border-left: 0;
`;

export default App;
